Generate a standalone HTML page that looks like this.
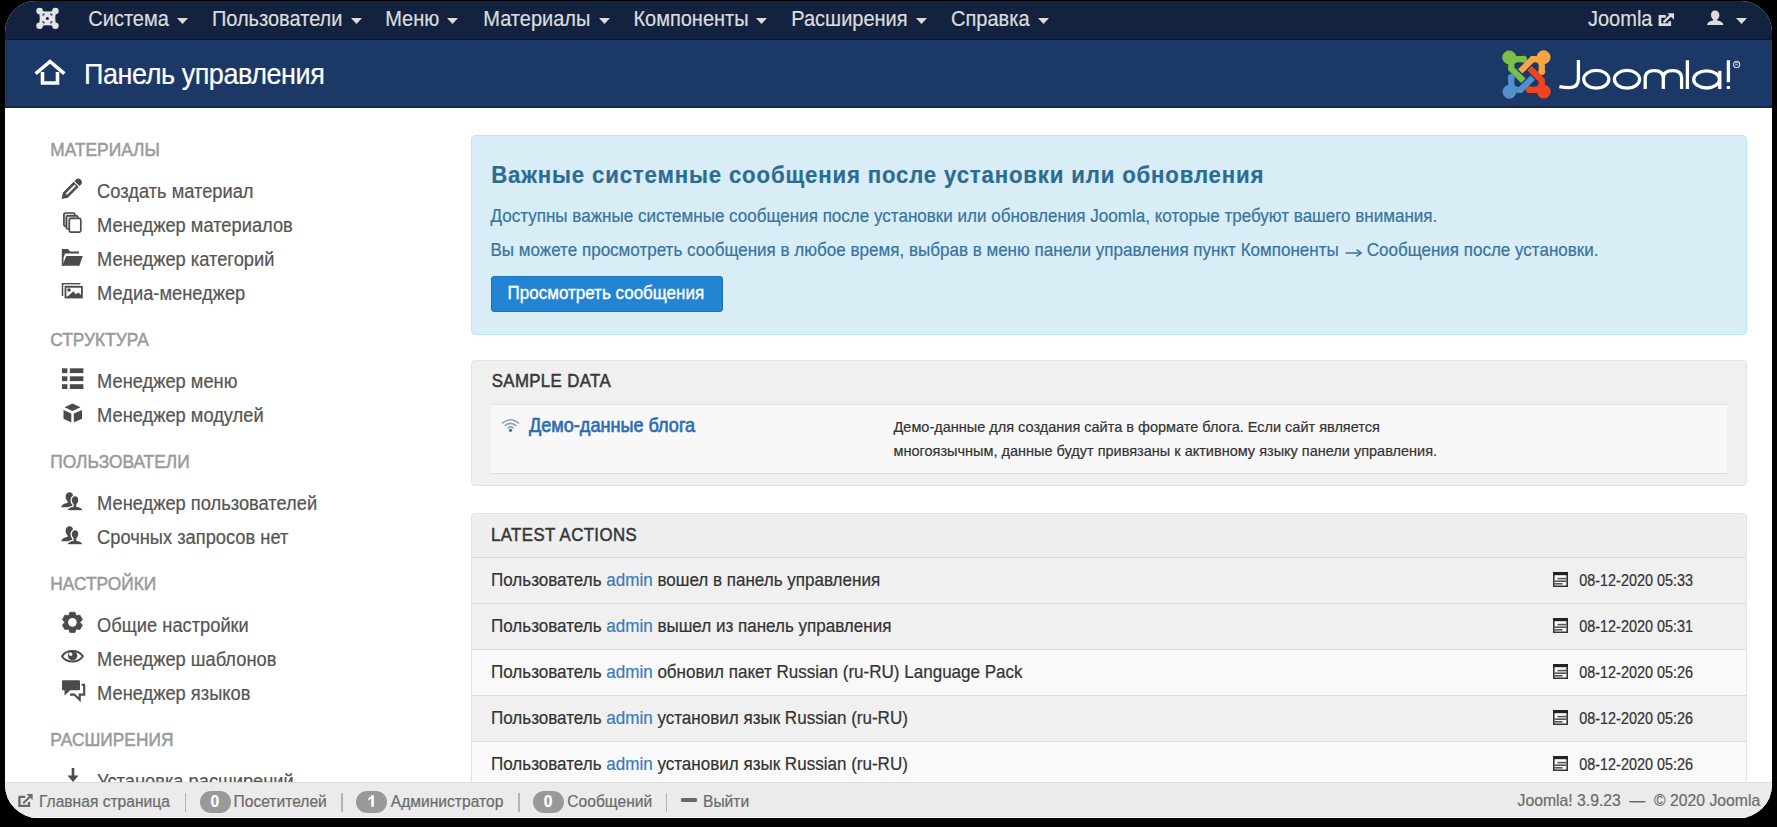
<!DOCTYPE html>
<html><head><meta charset="utf-8"><style>
html,body{margin:0;padding:0;}
body{width:1777px;height:827px;background:#000;overflow:hidden;position:relative;font-family:"Liberation Sans", sans-serif;}
#f{position:absolute;left:0;top:0;width:1777px;height:827px;background:#fff;clip-path:inset(1px 5px 9px 5px round 31px 31px 33px 33px);overflow:hidden;}
.t{position:absolute;white-space:nowrap;line-height:1;transform:scaleY(1.07);transform-origin:0 84.65%;-webkit-text-stroke-width:0.2px;}
.r{position:absolute;}
</style></head><body><div id="f">
<div class="r" style="left:0px;top:0px;width:1777px;height:40px;background:#13223f"></div>
<div class="r" style="left:0px;top:39px;width:1777px;height:1px;background:#0d1830"></div>
<div class="r" style="left:0px;top:40px;width:1777px;height:67px;background:#1b3867"></div>
<div class="r" style="left:0px;top:106px;width:1777px;height:2px;background:#10284f"></div>
<svg class="r" style="left:32px;top:4px;" width="30" height="30" viewBox="0 0 30 30"><g fill="#e3e3e3"><circle cx="7.6" cy="7" r="3.3"/><circle cx="23.4" cy="7" r="3.3"/><circle cx="7.6" cy="21.8" r="3.3"/><circle cx="23.4" cy="21.8" r="3.3"/><path d="M7 6.6Q15.5 8.6 24 6.6Q22.4 14.4 24 22.2Q15.5 20.2 7 22.2Q8.6 14.4 7 6.6Z"/></g><circle cx="15.4" cy="14.4" r="1.5" fill="#13223f"/><g fill="#13223f" opacity="0.75"><ellipse cx="11.5" cy="10.5" rx="1.5" ry="0.9" transform="rotate(-40 11.5 10.5)"/><ellipse cx="19.3" cy="10.5" rx="1.5" ry="0.9" transform="rotate(40 19.3 10.5)"/><ellipse cx="11.5" cy="18.3" rx="1.5" ry="0.9" transform="rotate(40 11.5 18.3)"/><ellipse cx="19.3" cy="18.3" rx="1.5" ry="0.9" transform="rotate(-40 19.3 18.3)"/></g></svg>
<div class="t" style="left:88.3px;top:9.37px;font-size:20px;color:#dcdcdc;font-weight:400;">Система</div>
<svg class="r" style="left:177px;top:18px;" width="11" height="6" viewBox="0 0 11 6"><path d="M0 0H11L5.5 6Z" fill="#dcdcdc"/></svg>
<div class="t" style="left:211.9px;top:9.37px;font-size:20px;color:#dcdcdc;font-weight:400;">Пользователи</div>
<svg class="r" style="left:350.5px;top:18px;" width="11" height="6" viewBox="0 0 11 6"><path d="M0 0H11L5.5 6Z" fill="#dcdcdc"/></svg>
<div class="t" style="left:385.2px;top:9.37px;font-size:20px;color:#dcdcdc;font-weight:400;">Меню</div>
<svg class="r" style="left:447.4px;top:18px;" width="11" height="6" viewBox="0 0 11 6"><path d="M0 0H11L5.5 6Z" fill="#dcdcdc"/></svg>
<div class="t" style="left:483.3px;top:9.37px;font-size:20px;color:#dcdcdc;font-weight:400;">Материалы</div>
<svg class="r" style="left:599px;top:18px;" width="11" height="6" viewBox="0 0 11 6"><path d="M0 0H11L5.5 6Z" fill="#dcdcdc"/></svg>
<div class="t" style="left:633.4px;top:9.37px;font-size:20px;color:#dcdcdc;font-weight:400;">Компоненты</div>
<svg class="r" style="left:756px;top:18px;" width="11" height="6" viewBox="0 0 11 6"><path d="M0 0H11L5.5 6Z" fill="#dcdcdc"/></svg>
<div class="t" style="left:791.3px;top:9.37px;font-size:20px;color:#dcdcdc;font-weight:400;">Расширения</div>
<svg class="r" style="left:916px;top:18px;" width="11" height="6" viewBox="0 0 11 6"><path d="M0 0H11L5.5 6Z" fill="#dcdcdc"/></svg>
<div class="t" style="left:951.0999999999999px;top:9.37px;font-size:20px;color:#dcdcdc;font-weight:400;">Справка</div>
<svg class="r" style="left:1037.6px;top:18px;" width="11" height="6" viewBox="0 0 11 6"><path d="M0 0H11L5.5 6Z" fill="#dcdcdc"/></svg>
<div class="t" style="left:1588px;top:9.37px;font-size:20px;color:#dcdcdc;font-weight:400;">Joomla</div>
<svg class="r" style="left:1658px;top:13px;" width="17" height="14" viewBox="0 0 17 14"><path d="M7.8 3.35H1.95V11.65H11.75V8.3" fill="none" stroke="#dcdcdc" stroke-width="2.7"/><path d="M5.6 9.3L12.6 2.4" stroke="#dcdcdc" stroke-width="2.4"/><path d="M9.4 0.2H16V6.8Z" fill="#dcdcdc"/></svg>
<svg class="r" style="left:1706px;top:10px;" width="18" height="17" viewBox="0 0 18 17"><path d="M9 0.4C6.4 0.4 5 2.4 5 5C5 7.2 6.1 8.6 7.1 9.3V10.6C3.6 11.2 1.4 12.4 0.9 14.9H17.5C17 12.4 14.8 11.2 11.3 10.6V9.3C12.3 8.6 13.4 7.2 13.4 5C13.4 2.4 11.6 0.4 9 0.4Z" fill="#dcdcdc"/></svg>
<svg class="r" style="left:1736px;top:18px;" width="11" height="6" viewBox="0 0 11 6"><path d="M0 0H11L5.5 6Z" fill="#dcdcdc"/></svg>
<svg class="r" style="left:34px;top:58px;" width="32" height="28" viewBox="0 0 32 28"><path d="M3 14.5L16 3.5L29 14.5" fill="none" stroke="#fff" stroke-width="3.6" stroke-linecap="square"/><path d="M8.5 14V25H23.5V14" fill="none" stroke="#fff" stroke-width="3.6"/></svg>
<div class="t" style="left:84px;top:61.74px;font-size:27px;color:#fff;font-weight:400;letter-spacing:-0.45px">Панель управления</div>
<svg class="r" style="left:1498px;top:46px;" width="58" height="58" viewBox="0 0 58 58"><g transform="rotate(0 28.5 28.5)" fill="#7ac143" stroke="#7ac143"><circle cx="11.2" cy="11.4" r="6.5"/><path d="M25.5 13.2H20Q13.2 13.2 13.2 20V22.6L25.4 34.8" fill="none" stroke-width="6.2"/><circle cx="25.5" cy="13.2" r="3.1"/></g><g transform="rotate(90 28.5 28.5)" fill="#f9a541" stroke="#f9a541"><circle cx="11.2" cy="11.4" r="6.5"/><path d="M25.5 13.2H20Q13.2 13.2 13.2 20V22.6L25.4 34.8" fill="none" stroke-width="6.2"/><circle cx="25.5" cy="13.2" r="3.1"/></g><g transform="rotate(180 28.5 28.5)" fill="#f44321" stroke="#f44321"><circle cx="11.2" cy="11.4" r="6.5"/><path d="M25.5 13.2H20Q13.2 13.2 13.2 20V22.6L25.4 34.8" fill="none" stroke-width="6.2"/><circle cx="25.5" cy="13.2" r="3.1"/></g><g transform="rotate(270 28.5 28.5)" fill="#5091cd" stroke="#5091cd"><circle cx="11.2" cy="11.4" r="6.5"/><path d="M25.5 13.2H20Q13.2 13.2 13.2 20V22.6L25.4 34.8" fill="none" stroke-width="6.2"/><circle cx="25.5" cy="13.2" r="3.1"/></g></svg>
<svg class="r" style="left:1555px;top:55px;" width="192" height="40" viewBox="0 0 192 40"><g fill="none" stroke="#fff" stroke-width="3.3"><path d="M23.4 5.1V24Q23.4 32.6 14.5 32.6Q9 32.6 4.4 31.6"/><ellipse cx="41.3" cy="24.3" rx="12.6" ry="8.9"/><ellipse cx="72" cy="24.3" rx="12.6" ry="8.9"/><path d="M90.2 34V23Q90.2 15.6 99.25 15.6Q108.3 15.6 108.3 23V34M108.3 23Q108.3 15.6 117.45 15.6Q126.6 15.6 126.6 23V34"/><path d="M132.4 5.3V34"/><ellipse cx="151.6" cy="24.4" rx="12.9" ry="8.6"/><path d="M164.8 15.8V34"/><path d="M173.4 5.3V27.2"/></g><rect x="171.7" y="30.9" width="3.4" height="3.1" rx="0.8" fill="#fff"/><circle cx="181.6" cy="9.4" r="3.1" fill="none" stroke="#dde" stroke-width="1.1"/><text x="180.1" y="11.2" font-size="4.6" font-family="Liberation Sans" fill="#dde">R</text></svg>
<div class="t" style="left:50.3px;top:141.91px;font-size:17.35px;color:#9a9a9a;font-weight:400;-webkit-text-stroke:0.5px #9a9a9a">МАТЕРИАЛЫ</div>
<div class="t" style="left:50.3px;top:331.91px;font-size:17.35px;color:#9a9a9a;font-weight:400;-webkit-text-stroke:0.5px #9a9a9a">СТРУКТУРА</div>
<div class="t" style="left:50.3px;top:453.91px;font-size:17.35px;color:#9a9a9a;font-weight:400;-webkit-text-stroke:0.5px #9a9a9a">ПОЛЬЗОВАТЕЛИ</div>
<div class="t" style="left:50.3px;top:575.91px;font-size:17.35px;color:#9a9a9a;font-weight:400;-webkit-text-stroke:0.5px #9a9a9a">НАСТРОЙКИ</div>
<div class="t" style="left:50.3px;top:731.91px;font-size:17.35px;color:#9a9a9a;font-weight:400;-webkit-text-stroke:0.5px #9a9a9a">РАСШИРЕНИЯ</div>
<div class="t" style="left:97.1px;top:182.51px;font-size:18.3px;color:#555555;font-weight:400;">Создать материал</div>
<div class="t" style="left:97.1px;top:216.51px;font-size:18.3px;color:#555555;font-weight:400;">Менеджер материалов</div>
<div class="t" style="left:97.1px;top:250.51px;font-size:18.3px;color:#555555;font-weight:400;">Менеджер категорий</div>
<div class="t" style="left:97.1px;top:284.51px;font-size:18.3px;color:#555555;font-weight:400;">Медиа-менеджер</div>
<div class="t" style="left:97.1px;top:372.51px;font-size:18.3px;color:#555555;font-weight:400;">Менеджер меню</div>
<div class="t" style="left:97.1px;top:406.51px;font-size:18.3px;color:#555555;font-weight:400;">Менеджер модулей</div>
<div class="t" style="left:97.1px;top:494.51px;font-size:18.3px;color:#555555;font-weight:400;">Менеджер пользователей</div>
<div class="t" style="left:97.1px;top:528.51px;font-size:18.3px;color:#555555;font-weight:400;">Срочных запросов нет</div>
<div class="t" style="left:97.1px;top:616.51px;font-size:18.3px;color:#555555;font-weight:400;">Общие настройки</div>
<div class="t" style="left:97.1px;top:650.51px;font-size:18.3px;color:#555555;font-weight:400;">Менеджер шаблонов</div>
<div class="t" style="left:97.1px;top:684.51px;font-size:18.3px;color:#555555;font-weight:400;">Менеджер языков</div>
<div class="t" style="left:97.1px;top:772.51px;font-size:18.3px;color:#555555;font-weight:400;">Установка расширений</div>
<svg class="r" style="left:58px;top:174px;" width="30" height="30" viewBox="0 0 30 30"><g transform="translate(3.6 24.9) rotate(-45)" fill="#4b4b4b"><path d="M0 0L5.2 -3.5H20.6V3.5H5.2Z"/><rect x="6.6" y="-1" width="12.8" height="2" fill="#eee"/><path d="M21.7 -3.5H23.6A3.5 3.5 0 0 1 23.6 3.5H21.7Z"/></g></svg>
<svg class="r" style="left:58px;top:208px;" width="30" height="30" viewBox="0 0 30 30"><g stroke="#4b4b4b" stroke-width="1.7"><rect x="5.9" y="5" width="11.1" height="13.4" rx="1.6" fill="#d8d8d8"/><rect x="8.4" y="7.9" width="11.5" height="13.1" rx="1.6" fill="#e0e0e0"/><rect x="11.3" y="10.4" width="11.5" height="13.8" rx="1.6" fill="#fff"/></g></svg>
<svg class="r" style="left:58px;top:244px;" width="30" height="26" viewBox="0 0 30 26"><g fill="#4b4b4b"><path d="M3.8 5H9.8L12.3 7.5H21V9.4H7.2L5.5 13.5V21.7H3.8Z"/><path d="M8.2 12H24.8L21.4 21.7H4.4Z"/></g></svg>
<svg class="r" style="left:58px;top:278px;" width="30" height="26" viewBox="0 0 30 26"><path d="M4.5 17.9V5.7H22.3" fill="none" stroke="#4b4b4b" stroke-width="1.5"/><path d="M6.1 6.8H22" stroke="#c8c8c8" stroke-width="1.2"/><rect x="7.5" y="8.8" width="16.4" height="10.7" fill="#fff" stroke="#4b4b4b" stroke-width="1.8"/><circle cx="11" cy="12" r="1.8" fill="#4b4b4b"/><path d="M9 19L15.4 13.2L17.9 16.3L20.4 14.5L23 17V19.5H9Z" fill="#4b4b4b"/></svg>
<svg class="r" style="left:61.7px;top:368px;" width="22" height="21" viewBox="0 0 22 21"><g fill="#4b4b4b"><rect x="0" y="0.3" width="5.4" height="4.8"/><rect x="7.8" y="0.3" width="13.6" height="4.8"/><rect x="0" y="8.3" width="5.4" height="4.8"/><rect x="7.8" y="8.3" width="13.6" height="4.8"/><rect x="0" y="16.2" width="5.4" height="4.8"/><rect x="7.8" y="16.2" width="13.6" height="4.8"/></g></svg>
<svg class="r" style="left:63px;top:403px;" width="20" height="20" viewBox="0 0 20 20"><g fill="#4b4b4b"><path d="M9.5 0.5L17.5 4.3L9.5 8L1.5 4.3Z"/><path d="M0.5 7L8.3 10.4V19.5L0.5 15.8Z"/><path d="M19 7L10.8 10.4V19.5L19 15.8Z"/></g></svg>
<svg class="r" style="left:58px;top:488px;" width="32" height="26" viewBox="0 0 32 26"><path transform="translate(-5.5 -3.5)" d="M17 7.7C14.8 7.7 13.1 9.5 13.1 12.3C13.1 14.3 13.9 15.7 15 16.5V18.4C11 18.8 9.3 20.6 8.7 22.8H25.3C24.7 20.6 23 18.8 19 18.4V16.5C20.1 15.7 20.9 14.3 20.9 12.3C20.9 9.5 19.2 7.7 17 7.7Z" fill="#4b4b4b"/><path d="M17 7.7C14.8 7.7 13.1 9.5 13.1 12.3C13.1 14.3 13.9 15.7 15 16.5V18.4C11 18.8 9.3 20.6 8.7 22.8H25.3C24.7 20.6 23 18.8 19 18.4V16.5C20.1 15.7 20.9 14.3 20.9 12.3C20.9 9.5 19.2 7.7 17 7.7Z" fill="#4b4b4b" stroke="#fff" stroke-width="1.3"/></svg>
<svg class="r" style="left:58px;top:522px;" width="32" height="26" viewBox="0 0 32 26"><path transform="translate(-5.5 -3.5)" d="M17 7.7C14.8 7.7 13.1 9.5 13.1 12.3C13.1 14.3 13.9 15.7 15 16.5V18.4C11 18.8 9.3 20.6 8.7 22.8H25.3C24.7 20.6 23 18.8 19 18.4V16.5C20.1 15.7 20.9 14.3 20.9 12.3C20.9 9.5 19.2 7.7 17 7.7Z" fill="#4b4b4b"/><path d="M17 7.7C14.8 7.7 13.1 9.5 13.1 12.3C13.1 14.3 13.9 15.7 15 16.5V18.4C11 18.8 9.3 20.6 8.7 22.8H25.3C24.7 20.6 23 18.8 19 18.4V16.5C20.1 15.7 20.9 14.3 20.9 12.3C20.9 9.5 19.2 7.7 17 7.7Z" fill="#4b4b4b" stroke="#fff" stroke-width="1.3"/></svg>
<svg class="r" style="left:58px;top:610px;" width="30" height="26" viewBox="0 0 30 26"><path d="M10.62 5.75 L11.83 2.27 L16.97 2.27 L18.18 5.75 L18.22 5.78 L21.84 5.08 L24.41 9.54 L22.00 12.32 L22.00 12.38 L24.41 15.16 L21.84 19.62 L18.22 18.92 L18.18 18.95 L16.97 22.43 L11.83 22.43 L10.62 18.95 L10.58 18.92 L6.96 19.62 L4.39 15.16 L6.80 12.38 L6.80 12.32 L4.39 9.54 L6.96 5.08 L10.58 5.78Z" fill="#4b4b4b" stroke="#4b4b4b" stroke-width="0.8" stroke-linejoin="round"/><circle cx="14.4" cy="12.35" r="4.3" fill="#fff"/></svg>
<svg class="r" style="left:58px;top:644px;" width="30" height="26" viewBox="0 0 30 26"><path d="M4 12.3C8.2 5.3 20.6 5.3 24.8 12.3C20.6 19.3 8.2 19.3 4 12.3Z" fill="none" stroke="#4b4b4b" stroke-width="2"/><circle cx="14.6" cy="11.7" r="4.7" fill="#4b4b4b"/><circle cx="12.7" cy="10.3" r="1.7" fill="#fff"/></svg>
<svg class="r" style="left:58px;top:676px;" width="30" height="30" viewBox="0 0 30 30"><path d="M4 5.2Q4 4.2 5 4.2H21Q22 4.2 22 5.2V13.2Q22 14.2 21 14.2H12.3L6.5 19.4V14.2H5Q4 14.2 4 13.2Z" fill="#4b4b4b"/><path d="M23.6 8.8H26.2V18.6H21.7V23.8L16.3 18.6H12" fill="none" stroke="#4b4b4b" stroke-width="2.1"/></svg>
<svg class="r" style="left:66.5px;top:768px;" width="12" height="15" viewBox="0 0 12 15"><path d="M6 0V10" stroke="#4b4b4b" stroke-width="2.6"/><path d="M0.5 7.5H11.5L6 14Z" fill="#4b4b4b"/></svg>
<div class="r" style="left:471px;top:135px;width:1276px;height:200px;background:#d9edf7;border:1px solid #bce8f1;border-radius:4px;box-sizing:border-box"></div>
<div class="t" style="left:491.2px;top:165.41px;font-size:22.2px;color:#2c6c93;font-weight:700;letter-spacing:0.84px">Важные системные сообщения после установки или обновления</div>
<div class="t" style="left:490.5px;top:208.17px;font-size:17.05px;color:#37749e;font-weight:400;">Доступны важные системные сообщения после установки или обновления Joomla, которые требуют вашего внимания.</div>
<div class="t" style="left:490.5px;top:242.37px;font-size:17.05px;color:#37749e;font-weight:400;">Вы можете просмотреть сообщения в любое время, выбрав в меню панели управления пункт Компоненты</div>
<svg class="r" style="left:1345px;top:247.5px;" width="18" height="11" viewBox="0 0 18 11"><path d="M0.5 5H15.5" stroke="#37749e" stroke-width="1.5"/><path d="M11.5 1.6L16.2 5L11.5 8.4" fill="none" stroke="#37749e" stroke-width="1.5"/></svg>
<div class="t" style="left:1366.8px;top:242.41px;font-size:17px;color:#37749e;font-weight:400;">Сообщения после установки.</div>
<div class="r" style="left:490.5px;top:275.5px;width:232px;height:36px;background:#2384d3;border:1px solid #1d6fb8;border-radius:3px;box-sizing:border-box"></div>
<div class="t" style="left:507.6px;top:284.61px;font-size:17px;color:#fff;font-weight:400;-webkit-text-stroke:0.35px #fff">Просмотреть сообщения</div>
<div class="r" style="left:471px;top:359.5px;width:1276px;height:126.5px;background:#f0f0f0;border:1px solid #e4e4e4;border-radius:4px;box-sizing:border-box"></div>
<div class="t" style="left:491.8px;top:374.38px;font-size:16.8px;color:#383838;font-weight:400;-webkit-text-stroke:0.5px #383838;letter-spacing:0.38px">SAMPLE DATA</div>
<div class="r" style="left:490.5px;top:404px;width:1236.5px;height:69.5px;background:#f8f8f8;border-top:1px solid #e2e2e2;border-bottom:1px solid #dcdcdc;box-sizing:border-box"></div>
<svg class="r" style="left:500.5px;top:417.5px;" width="19" height="14" viewBox="0 0 19 14"><g fill="none" stroke="#8e9db3" stroke-width="1.6" stroke-linecap="round"><path d="M1.5 5Q9.5 -1.5 17.5 5"/><path d="M4.2 7.6Q9.5 3 14.8 7.6"/><path d="M6.8 10Q9.5 7.6 12.2 10"/></g><circle cx="9.5" cy="12.3" r="1.6" fill="#2f6fb0"/></svg>
<div class="t" style="left:529px;top:416.68px;font-size:18.1px;color:#2b6db3;font-weight:400;-webkit-text-stroke:0.6px #2b6db3">Демо-данные блога</div>
<div class="t" style="left:893.5px;top:419.73px;font-size:14.5px;color:#333;font-weight:400;">Демо-данные для создания сайта в формате блога. Если сайт является</div>
<div class="t" style="left:893.5px;top:444.03px;font-size:14.5px;color:#333;font-weight:400;">многоязычным, данные будут привязаны к активному языку панели управления.</div>
<div class="r" style="left:471px;top:512.5px;width:1276px;height:320px;background:#efefef;border:1px solid #e2e2e2;border-radius:4px;box-sizing:border-box"></div>
<div class="t" style="left:491px;top:527.78px;font-size:16.8px;color:#383838;font-weight:400;-webkit-text-stroke:0.5px #383838;letter-spacing:0.42px">LATEST ACTIONS</div>
<div class="r" style="left:472px;top:557px;width:1274px;height:46px;background:#f0f0f0;border-top:1px solid #dcdcdc;box-sizing:border-box"></div>
<div class="t" style="left:491px;top:572.07px;font-size:17.05px;color:#333;font-weight:400;">Пользователь <span style="color:#3a7bbd">admin</span> вошел в панель управления</div>
<svg class="r" style="left:1552.5px;top:572.2px;" width="15" height="15" viewBox="0 0 15 15"><path d="M0.8 0.8H14.2V14.2H0.8Z" fill="#fff" stroke="#333" stroke-width="1.6"/><rect x="0" y="0" width="15" height="3.2" fill="#222"/><g fill="#555"><rect x="4.5" y="5.8" width="9" height="1.6"/><rect x="1.5" y="8.4" width="12" height="1.6"/><rect x="1.5" y="11" width="8" height="1.6"/></g></svg>
<div class="t" style="left:1579.3px;top:574.31px;font-size:14.4px;color:#333;font-weight:400;-webkit-text-stroke:0.2px #333;transform:scaleY(1.1)">08-12-2020 05:33</div>
<div class="r" style="left:472px;top:603px;width:1274px;height:46px;background:#f0f0f0;border-top:1px solid #dcdcdc;box-sizing:border-box"></div>
<div class="t" style="left:491px;top:618.07px;font-size:17.05px;color:#333;font-weight:400;">Пользователь <span style="color:#3a7bbd">admin</span> вышел из панель управления</div>
<svg class="r" style="left:1552.5px;top:618.2px;" width="15" height="15" viewBox="0 0 15 15"><path d="M0.8 0.8H14.2V14.2H0.8Z" fill="#fff" stroke="#333" stroke-width="1.6"/><rect x="0" y="0" width="15" height="3.2" fill="#222"/><g fill="#555"><rect x="4.5" y="5.8" width="9" height="1.6"/><rect x="1.5" y="8.4" width="12" height="1.6"/><rect x="1.5" y="11" width="8" height="1.6"/></g></svg>
<div class="t" style="left:1579.3px;top:620.31px;font-size:14.4px;color:#333;font-weight:400;-webkit-text-stroke:0.2px #333;transform:scaleY(1.1)">08-12-2020 05:31</div>
<div class="r" style="left:472px;top:648.7px;width:1274px;height:46px;background:#f9f9f9;border-top:1px solid #dcdcdc;box-sizing:border-box"></div>
<div class="t" style="left:491px;top:663.77px;font-size:17.05px;color:#333;font-weight:400;">Пользователь <span style="color:#3a7bbd">admin</span> обновил пакет Russian (ru-RU) Language Pack</div>
<svg class="r" style="left:1552.5px;top:663.9000000000001px;" width="15" height="15" viewBox="0 0 15 15"><path d="M0.8 0.8H14.2V14.2H0.8Z" fill="#fff" stroke="#333" stroke-width="1.6"/><rect x="0" y="0" width="15" height="3.2" fill="#222"/><g fill="#555"><rect x="4.5" y="5.8" width="9" height="1.6"/><rect x="1.5" y="8.4" width="12" height="1.6"/><rect x="1.5" y="11" width="8" height="1.6"/></g></svg>
<div class="t" style="left:1579.3px;top:666.01px;font-size:14.4px;color:#333;font-weight:400;-webkit-text-stroke:0.2px #333;transform:scaleY(1.1)">08-12-2020 05:26</div>
<div class="r" style="left:472px;top:694.5px;width:1274px;height:46px;background:#f0f0f0;border-top:1px solid #dcdcdc;box-sizing:border-box"></div>
<div class="t" style="left:491px;top:709.57px;font-size:17.05px;color:#333;font-weight:400;">Пользователь <span style="color:#3a7bbd">admin</span> установил язык Russian (ru-RU)</div>
<svg class="r" style="left:1552.5px;top:709.7px;" width="15" height="15" viewBox="0 0 15 15"><path d="M0.8 0.8H14.2V14.2H0.8Z" fill="#fff" stroke="#333" stroke-width="1.6"/><rect x="0" y="0" width="15" height="3.2" fill="#222"/><g fill="#555"><rect x="4.5" y="5.8" width="9" height="1.6"/><rect x="1.5" y="8.4" width="12" height="1.6"/><rect x="1.5" y="11" width="8" height="1.6"/></g></svg>
<div class="t" style="left:1579.3px;top:711.81px;font-size:14.4px;color:#333;font-weight:400;-webkit-text-stroke:0.2px #333;transform:scaleY(1.1)">08-12-2020 05:26</div>
<div class="r" style="left:472px;top:740.5px;width:1274px;height:46px;background:#f9f9f9;border-top:1px solid #dcdcdc;box-sizing:border-box"></div>
<div class="t" style="left:491px;top:755.57px;font-size:17.05px;color:#333;font-weight:400;">Пользователь <span style="color:#3a7bbd">admin</span> установил язык Russian (ru-RU)</div>
<svg class="r" style="left:1552.5px;top:755.7px;" width="15" height="15" viewBox="0 0 15 15"><path d="M0.8 0.8H14.2V14.2H0.8Z" fill="#fff" stroke="#333" stroke-width="1.6"/><rect x="0" y="0" width="15" height="3.2" fill="#222"/><g fill="#555"><rect x="4.5" y="5.8" width="9" height="1.6"/><rect x="1.5" y="8.4" width="12" height="1.6"/><rect x="1.5" y="11" width="8" height="1.6"/></g></svg>
<div class="t" style="left:1579.3px;top:757.81px;font-size:14.4px;color:#333;font-weight:400;-webkit-text-stroke:0.2px #333;transform:scaleY(1.1)">08-12-2020 05:26</div>
<div class="r" style="left:0px;top:782px;width:1777px;height:45px;background:#ebebeb;border-top:1px solid #dcdcdc;box-sizing:border-box"></div>
<svg class="r" style="left:18px;top:793.5px;" width="15" height="14" viewBox="0 0 15 14"><path d="M7.2 2.85H1.45V11.95H11.05V8.1" fill="none" stroke="#6a6a6a" stroke-width="2.3"/><path d="M5.2 9.3L11.6 2.9" stroke="#6a6a6a" stroke-width="2.1"/><path d="M8.5 0.1H14.6V6.2Z" fill="#6a6a6a"/></svg>
<div class="t" style="left:39px;top:793.79px;font-size:15.6px;color:#6a6a6a;font-weight:400;">Главная страница</div>
<div class="r" style="left:184.9px;top:792.6px;width:1.6px;height:19.7px;background:#b4b4b4"></div>
<div class="r" style="left:341.4px;top:792.6px;width:1.6px;height:19.7px;background:#b4b4b4"></div>
<div class="r" style="left:518.4px;top:792.6px;width:1.6px;height:19.7px;background:#b4b4b4"></div>
<div class="r" style="left:665.9px;top:792.6px;width:1.6px;height:19.7px;background:#b4b4b4"></div>
<div class="r" style="left:199.5px;top:791.2px;width:31.0px;height:22.3px;background:#999;border-radius:11px"></div>
<div class="t" style="left:210.6px;top:793.79px;font-size:15.6px;color:#fff;font-weight:700;">0</div>
<div class="r" style="left:355.7px;top:791.2px;width:31.5px;height:22.3px;background:#999;border-radius:11px"></div>
<svg class="r" style="left:366.95px;top:795px;" width="9" height="12" viewBox="0 0 9 12"><path d="M4.6 0.2H6.9V11.8H4.3V3.6Q3 4.8 1.2 5.4V3.2Q3.6 2.2 4.6 0.2Z" fill="#fff"/></svg>
<div class="r" style="left:532.6px;top:791.2px;width:31.100000000000023px;height:22.3px;background:#999;border-radius:11px"></div>
<div class="t" style="left:543.7500000000001px;top:793.79px;font-size:15.6px;color:#fff;font-weight:700;">0</div>
<div class="t" style="left:233.5px;top:793.79px;font-size:15.6px;color:#6a6a6a;font-weight:400;">Посетителей</div>
<div class="t" style="left:390.8px;top:793.79px;font-size:15.6px;color:#6a6a6a;font-weight:400;">Администратор</div>
<div class="t" style="left:567.3px;top:793.79px;font-size:15.6px;color:#6a6a6a;font-weight:400;">Сообщений</div>
<div class="r" style="left:680.5px;top:798.2px;width:16.5px;height:3.7px;background:#6a6a6a;border-radius:1px"></div>
<div class="t" style="left:703px;top:793.79px;font-size:15.6px;color:#6a6a6a;font-weight:400;">Выйти</div>
<div class="t" style="left:1517.5px;top:793.07px;font-size:15.75px;color:#6a6a6a;font-weight:400;">Joomla! 3.9.23 &nbsp;— &nbsp;© 2020 Joomla</div>
<div class="r" style="left:0px;top:816.6px;width:1777px;height:1.4px;background:#fafafa"></div>
</div></body></html>
